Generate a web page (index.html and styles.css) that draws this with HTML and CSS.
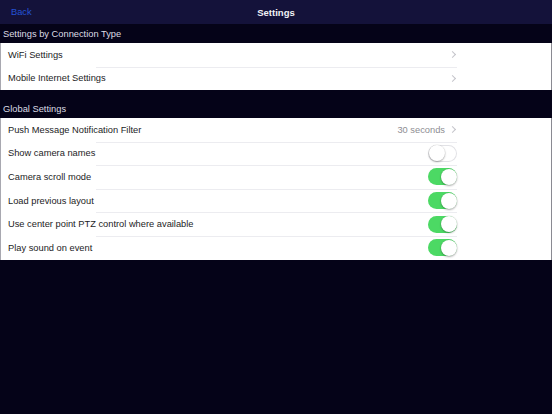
FILE: index.html
```html
<!DOCTYPE html>
<html>
<head>
<meta charset="utf-8">
<link rel="stylesheet" href="styles.css">
</head>
<body>
<div class="nav">
  <span class="back">Back</span>
  <span class="title">Settings</span>
</div>
<div class="header h1">Settings by Connection Type</div>
<div class="group g1">
  <div class="row"><span class="label">WiFi Settings</span><span class="right"><span class="chev"></span></span></div>
  <div class="row"><span class="label">Mobile Internet Settings</span><span class="right"><span class="chev"></span></span></div>
</div>
<div class="header h2">Global Settings</div>
<div class="group g2">
  <div class="row"><span class="label">Push Message Notification Filter</span><span class="right"><span class="value">30 seconds</span><span class="chev"></span></span></div>
  <div class="row"><span class="label">Show camera names</span><span class="right"><span class="toggle"></span></span></div>
  <div class="row"><span class="label">Camera scroll mode</span><span class="right"><span class="toggle on"></span></span></div>
  <div class="row"><span class="label">Load previous layout</span><span class="right"><span class="toggle on"></span></span></div>
  <div class="row"><span class="label">Use center point PTZ control where available</span><span class="right"><span class="toggle on"></span></span></div>
  <div class="row"><span class="label">Play sound on event</span><span class="right"><span class="toggle on"></span></span></div>
</div>
</body>
</html>
```
FILE: styles.css
```css
html, body {
  margin: 0;
  padding: 0;
  background: #050318;
  font-family: "Liberation Sans", Arial, sans-serif;
  font-size: 9.3px;
  width: 552px;
  height: 414px;
  overflow: hidden;
}
.nav {
  height: 24px;
  background: #14123a;
  position: relative;
  display: flex;
  align-items: center;
  justify-content: center;
}
.back {
  position: absolute;
  left: 11px;
  top: 7px;
  color: #2452d6;
  font-size: 9.3px;
}
.title {
  color: #f2f2f6;
  font-size: 9.5px;
  font-weight: bold;
}
.header {
  color: #dcdce4;
  padding-left: 3px;
  box-sizing: border-box;
  display: flex;
  align-items: flex-end;
}
.h1 { height: 19px; padding-bottom: 4px; }
.h2 { height: 28px; padding-bottom: 4px; }
.group {
  background: #ffffff;
  border-left: 1px solid #a8a8b0;
  border-right: 1px solid #8a8a92;
  width: 552px;
  box-sizing: border-box;
}
.g1 { height: 47px; }
.g2 { height: 142px; }
.row {
  height: 23.6px;
  display: flex;
  align-items: center;
  justify-content: space-between;
  padding-left: 7px;
  position: relative;
  color: #1c1c1e;
}
.row + .row::before {
  content: "";
  position: absolute;
  left: 95px;
  width: 361px;
  top: 0;
  height: 1px;
  background: #ececf0;
}
.right {
  display: flex;
  align-items: center;
  width: 110px;
  margin-right: 94px;
  justify-content: flex-end;
}
.value {
  color: #8e8e93;
  margin-right: 5px;
}
.chev {
  width: 4px;
  height: 4px;
  border-top: 1px solid #c4c4ca;
  border-right: 1px solid #c4c4ca;
  transform: rotate(45deg);
  margin-right: 2px;
}
.toggle {
  width: 29px;
  height: 17px;
  border-radius: 9px;
  background: #ffffff;
  box-shadow: inset 0 0 0 1px #e2e2e6;
  position: relative;
  box-sizing: border-box;
}
.toggle::after {
  content: "";
  position: absolute;
  left: 0.5px;
  top: 0.5px;
  width: 16px;
  height: 16px;
  border-radius: 50%;
  background: #fff;
  box-shadow: 0 1px 2px rgba(0,0,0,0.3), 0 0 0 0.5px rgba(0,0,0,0.08);
}
.toggle.on {
  background: #4cd964;
  box-shadow: none;
}
.toggle.on::after {
  left: 12.5px;
}
```
